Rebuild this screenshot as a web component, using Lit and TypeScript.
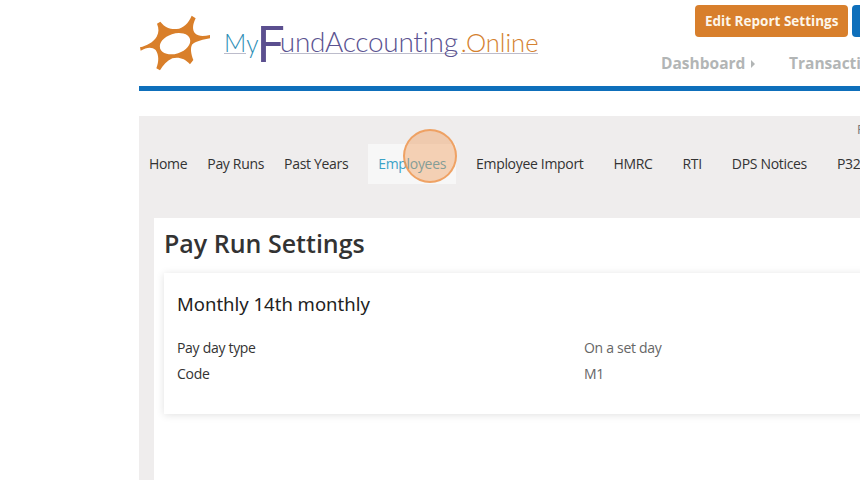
import { css, html, LitElement } from "lit";
import { customElement } from "lit/decorators.js";

const NAV = [
  { label: "Home" },
  { label: "Pay Runs" },
  { label: "Past Years" },
  { label: "Employees", spaced: true, active: true },
  { label: "Employee Import", spaced: true },
  { label: "HMRC", spaced: true },
  { label: "RTI", spaced: true },
  { label: "DPS Notices", spaced: true },
  { label: "P32", spaced: true },
];

@customElement("app-root")
export class AppRoot extends LitElement {
  static styles = css`
    :host {
      display: block;
      width: 860px;
      height: 480px;
      overflow: hidden;
      background: #fff;
      font-family: "Open Sans", "Liberation Sans", sans-serif;
    }
    .page {
      width: 1100px;
      height: 480px;
      margin-left: 139px;
      display: flex;
      flex-direction: column;
      position: relative;
    }
    .header {
      height: 86px;
      display: flex;
      border-bottom: 5px solid #0e6fbb;
      margin-bottom: 25px;
      flex: none;
    }
    .logo {
      display: flex;
      align-items: flex-start;
      width: 556px;
      flex: none;
    }
    .mark {
      width: 85px;
      height: 70px;
      margin: 5px 0 0 -4px;
      flex: none;
    }
    .wordmark {
      display: flex;
      align-items: flex-end;
      height: 33px;
      margin: 21px 0 0 4px;
      font-family: Lato, "Liberation Sans", sans-serif;
      font-weight: 300;
      white-space: nowrap;
    }
    .lined {
      border-bottom: 1px solid #bcbccb;
    }
    .my {
      color: #2b8db5;
      font-size: 24.5px;
      line-height: 21px;
    }
    .big-f {
      color: #5b4f8f;
      font-size: 50px;
      font-weight: 400;
      line-height: 33px;
      margin: 0 -5px -6px -2px;
    }
    .fund {
      color: #5b5391;
      font-size: 28px;
      line-height: 23px;
      letter-spacing: -0.3px;
    }
    .online {
      color: #d4812f;
      font-size: 25.5px;
      line-height: 21px;
      margin-left: 3px;
    }
    .actions {
      display: flex;
      flex-direction: column;
    }
    .buttons {
      display: flex;
      gap: 4px;
      margin-top: 5px;
    }
    .btn {
      height: 32px;
      border-radius: 4px;
      color: #fdf6ea;
      font-size: 13.5px;
      font-weight: 700;
      line-height: 32px;
      padding: 0 10px;
      white-space: nowrap;
    }
    .btn.orange {
      background: #d87f2c;
    }
    .btn.blue {
      background: #0e6fbb;
    }
    .menu {
      display: flex;
      margin: 15px 0 0 -34px;
      color: #b2b5b5;
      font-size: 15.5px;
      font-weight: 700;
      line-height: 22px;
      white-space: nowrap;
    }
    .menu div {
      display: flex;
      align-items: center;
      width: 128px;
    }
    .caret {
      width: 0;
      height: 0;
      margin: 2px 0 0 6px;
      border-left: 4px solid #b2b5b5;
      border-top: 4px solid transparent;
      border-bottom: 4px solid transparent;
    }
    .panel {
      flex: 1;
      background: #efeded;
      padding: 0 0 0 15px;
      display: flex;
      flex-direction: column;
    }
    .top-note {
      height: 28px;
      padding: 4px 0 0 703px;
      box-sizing: border-box;
      font-size: 13px;
      line-height: 18px;
      color: #777;
    }
    .tabs {
      display: flex;
      height: 40px;
      margin-left: -15px;
      flex: none;
      font-size: 14px;
      color: #333;
      letter-spacing: -0.32px;
    }
    .tab {
      padding: 0 10px;
      line-height: 40px;
      white-space: nowrap;
    }
    .tab.spaced {
      margin-left: 10px;
    }
    .tab.active {
      background: #f7f7f7;
      color: #3ba3c7;
    }
    .content {
      margin-top: 34px;
      flex: 1;
      background: #fff;
      padding: 8px 10px 10px;
    }
    h1 {
      margin: 0;
      font-size: 25px;
      line-height: 34px;
      font-weight: 600;
      color: #333;
    }
    .card {
      box-sizing: border-box;
      margin-top: 13px;
      height: 141px;
      padding: 17px 13px;
      background: #fff;
      box-shadow: 0 1px 8px rgba(0, 0, 0, 0.12);
    }
    h2 {
      margin: 0 0 17px;
      font-family: "Noto Sans", sans-serif;
      font-size: 18.5px;
      line-height: 28px;
      font-weight: 400;
      color: #222;
    }
    .rows {
      display: grid;
      grid-template-columns: 407px auto;
      justify-content: start;
      font-size: 14px;
      line-height: 26px;
      letter-spacing: -0.3px;
      color: #333;
    }
    .value {
      color: #666;
    }
    .ripple {
      position: absolute;
      left: 264px;
      top: 129px;
      width: 54px;
      height: 54px;
      box-sizing: border-box;
      border-radius: 50%;
      background: rgba(240, 150, 80, 0.4);
      border: 2px solid rgba(238, 150, 80, 0.8);
    }
  `;

  private renderMark() {
    return html`<svg class="mark" viewBox="0 0 255 210" aria-hidden="true">
      <path
        fill="#d97f2a"
        fill-rule="evenodd"
        d="M66 56 L76 50 C90 68 108 74 125 72 C145 70 160 55 170 32 L182 40 C172 60 172 75 180 85 C190 95 205 95 225 90 L225 100 C205 103 185 108 172 118 C165 128 168 148 175 165 L165 178 C150 160 130 155 112 160 C95 168 85 180 75 196 L64 190 C72 170 72 150 62 135 C50 125 35 127 17 137 L15 127 C35 122 55 112 65 95 C72 82 72 70 66 56 Z"
      ></path>
      <ellipse cx="120" cy="116" rx="47" ry="30" transform="rotate(-18 120 116)" fill="#fff"></ellipse>
    </svg>`;
  }

  render() {
    return html`
      <div class="page">
        <header class="header">
          <div class="logo">
            ${this.renderMark()}
            <div class="wordmark">
              <span class="my lined">M</span><span class="my">y</span
              ><span class="big-f">F</span
              ><span class="fund lined">undAccounting</span
              ><span class="online lined">.Online</span>
            </div>
          </div>
          <div class="actions">
            <div class="buttons">
              <div class="btn orange">Edit Report Settings</div>
              <div class="btn blue">Report</div>
            </div>
            <nav class="menu">
              <div>Dashboard<span class="caret"></span></div>
              <div>Transactions</div>
            </nav>
          </div>
        </header>
        <section class="panel">
          <div class="top-note">F</div>
          <nav class="tabs">
            ${NAV.map(
              (item) =>
                html`<div
                  class="tab ${item.spaced ? "spaced" : ""} ${item.active
                    ? "active"
                    : ""}"
                >
                  ${item.label}
                </div>`
            )}
          </nav>
          <main class="content">
            <h1>Pay Run Settings</h1>
            <div class="card">
              <h2>Monthly 14th monthly</h2>
              <div class="rows">
                <div>Pay day type</div>
                <div class="value">On a set day</div>
                <div>Code</div>
                <div class="value">M1</div>
              </div>
            </div>
          </main>
        </section>
        <div class="ripple"></div>
      </div>
    `;
  }
}
